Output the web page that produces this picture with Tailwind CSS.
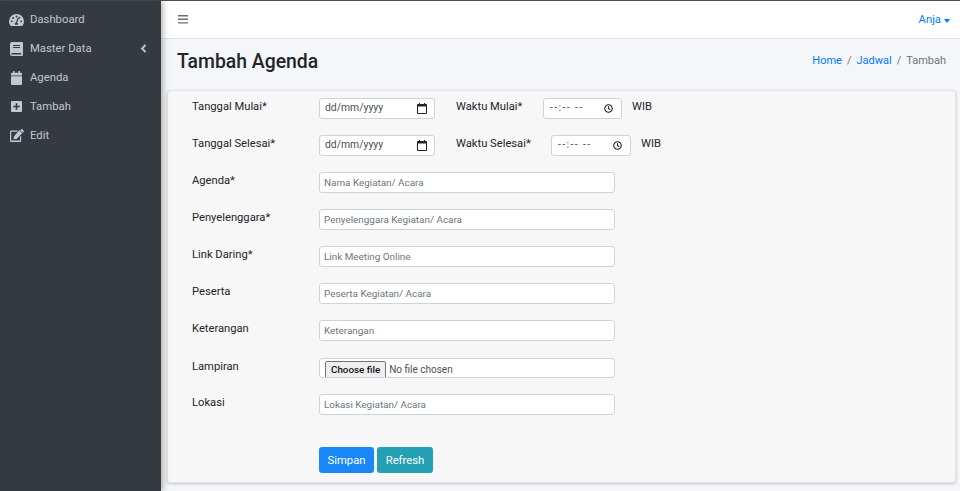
<!DOCTYPE html>
<html lang="en">
<head>
    <meta charset="UTF-8">
    <meta name="viewport" content="width=device-width, initial-scale=1.0">
    <title>Tambah Agenda</title>
    <script src="https://cdn.jsdelivr.net/npm/@tailwindcss/browser@4"></script>
</head>
<body class="h-[491px] overflow-hidden bg-[#f4f6f9] font-['Roboto','Liberation_Sans',sans-serif] text-[#212529]">
<div class="flex h-[491px] border-t border-[#4b5056]">
    <!-- Sidebar -->
    <aside class="w-[161px] shrink-0 bg-[#343a40] text-[#c2c7d0] text-[11.3px] leading-[18px] shadow-[2px_0_6px_rgba(0,0,0,0.3)] z-10 pt-[4px]">
        <a class="flex items-center h-[29px] pl-[9px]">
            <svg class="w-[15px] h-[14px] mr-[6px]" viewBox="0 0 16 14" fill="currentColor"><path d="M8 0.5a7.8 7.8 0 0 0-8 7.8c0 1.7.5 3.3 1.4 4.6.2.3.5.4.8.4h11.6c.3 0 .6-.1.8-.4.9-1.3 1.4-2.9 1.4-4.6A7.8 7.8 0 0 0 8 .5zM8 2.2a1 1 0 1 1 0 2 1 1 0 0 1 0-2zM3 9.4a1 1 0 1 1 0-2 1 1 0 0 1 0 2zm1.4-3.6a1 1 0 1 1 0-2 1 1 0 0 1 0 2zM9.6 12H6.4a1.7 1.7 0 0 1 1-2.3l1.5-4.5a.6.6 0 0 1 1.2.4L8.6 10a1.7 1.7 0 0 1 1 2zm1.7-6.5a1 1 0 1 1 .4-1.6 1 1 0 0 1-.4 1.6zM13 9.4a1 1 0 1 1 0-2 1 1 0 0 1 0 2z"/></svg>
            Dashboard
        </a>
        <a class="flex items-center h-[29px] pl-[10px] pr-[14px]">
            <svg class="w-[13px] h-[14px] mr-[7px]" viewBox="0 0 13 14" fill="currentColor"><path fill-rule="evenodd" d="M2 0h10a1 1 0 0 1 1 1v12a1 1 0 0 1-1 1H2a2 2 0 0 1-2-2V2a2 2 0 0 1 2-2zm1 3v1h7V3H3zm0 2v1h7V5H3zM1.8 11a.9.9 0 0 0 0 1.6h9.4V11H1.8z"/></svg>
            Master Data
            <svg class="w-[7px] h-[9px] ml-auto" viewBox="0 0 7 9" fill="none" stroke="currentColor" stroke-width="1.8"><path d="M5.5 1 2 4.5 5.5 8"/></svg>
        </a>
        <a class="flex items-center h-[29px] pl-[11px]">
            <svg class="w-[11px] h-[14px] mr-[8px]" viewBox="0 0 11 14" fill="currentColor"><path d="M2 0h1.5v1.7h4V0H9v1.7h1a1 1 0 0 1 1 1v1.8H0V2.7a1 1 0 0 1 1-1h1V0zM0 5.3h11V13a1 1 0 0 1-1 1H1a1 1 0 0 1-1-1V5.3z"/></svg>
            Agenda
        </a>
        <a class="flex items-center h-[29px] pl-[11px]">
            <svg class="w-[11px] h-[11px] mr-[8px]" viewBox="0 0 11 11" fill="currentColor"><path fill-rule="evenodd" d="M1 0h9a1 1 0 0 1 1 1v9a1 1 0 0 1-1 1H1a1 1 0 0 1-1-1V1a1 1 0 0 1 1-1zm3.7 2.2v2.5H2.2v1.6h2.5v2.5h1.6V6.3h2.5V4.7H6.3V2.2H4.7z"/></svg>
            Tambah
        </a>
        <a class="flex items-center h-[29px] pl-[10px]">
            <svg class="w-[14px] h-[13px] mr-[6px]" viewBox="0 0 14 13" fill="currentColor"><path d="M1.3 1.6h6.9L7 2.8H1.5a.3.3 0 0 0-.3.3v8.2c0 .2.1.3.3.3h8.2c.2 0 .3-.1.3-.3V8l1.2-1.2v4.6c0 .9-.6 1.6-1.4 1.6H1.3C.6 13 0 12.3 0 11.4V3.2c0-.9.6-1.6 1.3-1.6z"/><path d="M11.2 0.3a.8.8 0 0 1 1.1 0l1.4 1.4a.8.8 0 0 1 0 1.1l-1 1-2.5-2.5 1-1zM9.7 1.8l2.5 2.5L6.6 9.9l-3 .4.4-3 5.7-6.5z"/></svg>
            Edit
        </a>
    </aside>

    <div class="flex-1 min-w-0 flex flex-col">
        <!-- Top navbar -->
        <nav class="h-[38px] shrink-0 bg-white border-b border-[#dee2e6] flex items-center justify-between pl-[17px] pr-[10px]">
            <svg class="w-[10px] h-[9px] text-[#6b7075]" viewBox="0 0 10 9" fill="currentColor"><path d="M0 0h10v1.4H0zM0 3.6h10V5H0zM0 7.2h10v1.4H0z"/></svg>
            <span class="flex items-center mt-[2px] text-[11.3px] text-[#007bff]">Anja<span class="ml-[3px] border-x-[3.5px] border-x-transparent border-t-[4px] border-t-[#007bff]"></span></span>
        </nav>

        <!-- Page header -->
        <div class="h-[51px] shrink-0 flex items-center justify-between pl-[16px] pr-[14px] pb-[6px]">
            <h1 class="text-[19.4px] leading-none font-medium text-[#212529]">Tambah Agenda</h1>
            <ol class="flex text-[11px] text-[#6c757d] gap-[5px]">
                <li class="text-[#007bff]">Home</li><li>/</li><li class="text-[#007bff]">Jadwal</li><li>/</li><li>Tambah</li>
            </ol>
        </div>

        <!-- Form card -->
        <form class="ml-[6px] mr-[4px] h-[393px] rounded-[3px] bg-[#f7f7f8] border border-[#e2e4e7] shadow-[0_1px_3px_rgba(0,0,0,0.2)] pt-[7px] pl-[24px] text-[11.2px]">
            <div class="flex h-[21px] mb-[16px]">
                <label class="w-[127px] pt-[1px]">Tanggal Mulai*</label>
                <div class="w-[116px] h-[21px] flex items-center justify-between bg-white border border-[#ced4da] rounded-[3px] pl-[5px] pr-[7px] text-[10.4px] text-[#495057]">
                    <span class="mb-[1px]">dd/mm/yyyy</span>
                    <svg class="w-[10px] h-[11px] text-[#222]" viewBox="0 0 10 11" fill="currentColor"><path fill-rule="evenodd" d="M2 0h1v1h4V0h1v1h1a1 1 0 0 1 1 1v8a1 1 0 0 1-1 1H1a1 1 0 0 1-1-1V2a1 1 0 0 1 1-1h1V0zM1 3.5V10h8V3.5H1z"/></svg>
                </div>
                <label class="w-[87px] ml-[21px] pt-[1px]">Waktu Mulai*</label>
                <div class="w-[79px] h-[21px] flex items-center justify-between bg-white border border-[#ced4da] rounded-[3px] pl-[6px] pr-[8px] text-[10.4px] text-[#495057]">
                    <span class="mb-[1px] tracking-[1.4px]">--:-- --</span>
                    <svg class="w-[9px] h-[9px] text-[#222]" viewBox="0 0 10 10" fill="none" stroke="currentColor" stroke-width="1.2"><circle cx="5" cy="5" r="4.2"/><path d="M5 2.5V5l2 1.5"/></svg>
                </div>
                <span class="ml-[10px] pt-[1px]">WIB</span>
            </div>
            <div class="flex h-[21px] mb-[16px]">
                <label class="w-[127px] pt-[1px]">Tanggal Selesai*</label>
                <div class="w-[116px] h-[21px] flex items-center justify-between bg-white border border-[#ced4da] rounded-[3px] pl-[5px] pr-[7px] text-[10.4px] text-[#495057]">
                    <span class="mb-[1px]">dd/mm/yyyy</span>
                    <svg class="w-[10px] h-[11px] text-[#222]" viewBox="0 0 10 11" fill="currentColor"><path fill-rule="evenodd" d="M2 0h1v1h4V0h1v1h1a1 1 0 0 1 1 1v8a1 1 0 0 1-1 1H1a1 1 0 0 1-1-1V2a1 1 0 0 1 1-1h1V0zM1 3.5V10h8V3.5H1z"/></svg>
                </div>
                <label class="w-[95px] ml-[21px] pt-[1px]">Waktu Selesai*</label>
                <div class="w-[80px] h-[21px] flex items-center justify-between bg-white border border-[#ced4da] rounded-[3px] pl-[6px] pr-[8px] text-[10.4px] text-[#495057]">
                    <span class="mb-[1px] tracking-[1.4px]">--:-- --</span>
                    <svg class="w-[9px] h-[9px] text-[#222]" viewBox="0 0 10 10" fill="none" stroke="currentColor" stroke-width="1.2"><circle cx="5" cy="5" r="4.2"/><path d="M5 2.5V5l2 1.5"/></svg>
                </div>
                <span class="ml-[10px] pt-[1px]">WIB</span>
            </div>
            <div class="flex h-[21px] mb-[16px]">
                <label class="w-[127px] pt-[1px]">Agenda*</label>
                <input class="w-[296px] h-[21px] bg-white border border-[#ced4da] rounded-[3px] px-[4px] text-[9.9px] placeholder:text-[#6c757d]" placeholder="Nama Kegiatan/ Acara">
            </div>
            <div class="flex h-[21px] mb-[16px]">
                <label class="w-[127px] pt-[1px]">Penyelenggara*</label>
                <input class="w-[296px] h-[21px] bg-white border border-[#ced4da] rounded-[3px] px-[4px] text-[9.9px] placeholder:text-[#6c757d]" placeholder="Penyelenggara Kegiatan/ Acara">
            </div>
            <div class="flex h-[21px] mb-[16px]">
                <label class="w-[127px] pt-[1px]">Link Daring*</label>
                <input class="w-[296px] h-[21px] bg-white border border-[#ced4da] rounded-[3px] px-[4px] text-[9.9px] placeholder:text-[#6c757d]" placeholder="Link Meeting Online">
            </div>
            <div class="flex h-[21px] mb-[16px]">
                <label class="w-[127px] pt-[1px]">Peserta</label>
                <input class="w-[296px] h-[21px] bg-white border border-[#ced4da] rounded-[3px] px-[4px] text-[9.9px] placeholder:text-[#6c757d]" placeholder="Peserta Kegiatan/ Acara">
            </div>
            <div class="flex h-[21px] mb-[16px]">
                <label class="w-[127px] pt-[1px]">Keterangan</label>
                <input class="w-[296px] h-[21px] bg-white border border-[#ced4da] rounded-[3px] px-[4px] text-[9.9px] placeholder:text-[#6c757d]" placeholder="Keterangan">
            </div>
            <div class="flex h-[21px] mb-[16px]">
                <label class="w-[127px] pt-[2px]">Lampiran</label>
                <div class="w-[296px] h-[20px] mt-[1px] flex items-end bg-white border border-[#ced4da] rounded-[3px] pl-[5px] text-[10px] text-[#495057] overflow-hidden">
                    <span class="h-[18px] -mb-[2px] px-[5px] flex items-center bg-[#efefef] border border-[#767676] rounded-[2px] text-[#111] font-medium text-[9.8px]">Choose file</span>
                    <span class="ml-[3px] h-[18px] -mb-[1px] flex items-center">No file chosen</span>
                </div>
            </div>
            <div class="flex h-[21px]">
                <label class="w-[127px] pt-[1px]">Lokasi</label>
                <input class="w-[296px] h-[21px] bg-white border border-[#ced4da] rounded-[3px] px-[4px] text-[9.9px] placeholder:text-[#6c757d]" placeholder="Lokasi Kegiatan/ Acara">
            </div>
            <div class="flex gap-[3px] ml-[127px] mt-[32px]">
                <button type="button" class="w-[55px] h-[26px] pt-[3px] rounded-[3px] bg-[#1a87f8] text-white text-[11.3px]">Simpan</button>
                <button type="button" class="w-[56px] h-[26px] pt-[3px] rounded-[3px] bg-[#24a0b4] text-white text-[11.3px]">Refresh</button>
            </div>
        </form>
    </div>
</div>
</body>
</html>
